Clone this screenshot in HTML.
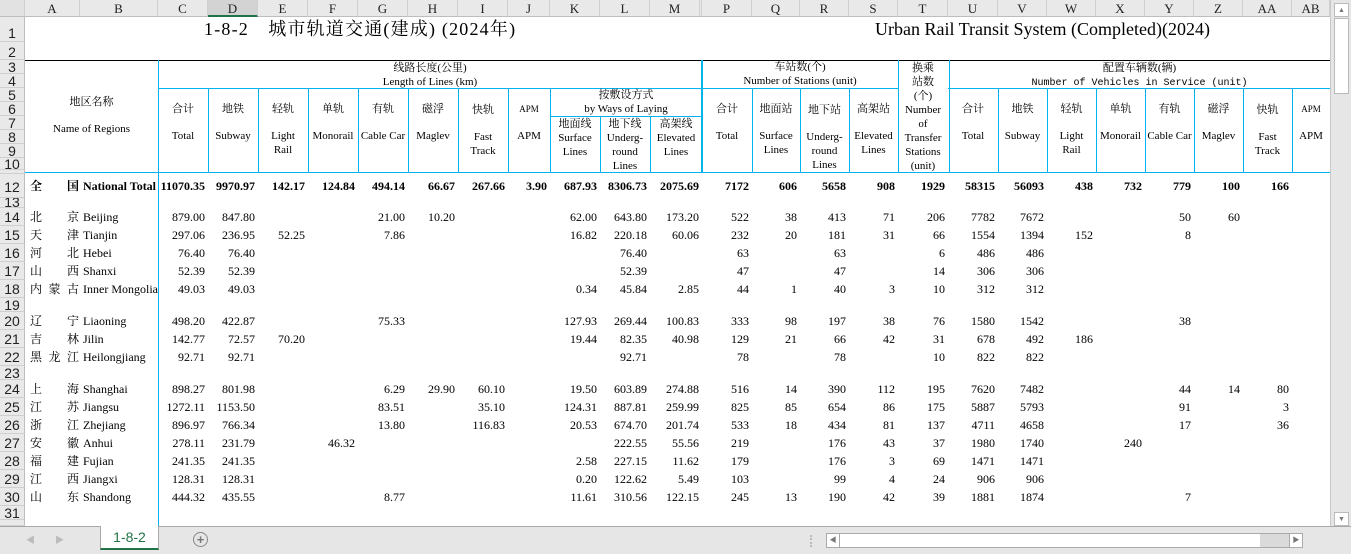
<!DOCTYPE html>
<html><head><meta charset="utf-8">
<style>
*{margin:0;padding:0;box-sizing:border-box}
body{width:1351px;height:554px;overflow:hidden;background:#fff;position:relative;font-family:"Liberation Serif","Noto Serif CJK SC",serif;color:#000}
.ch{position:absolute;top:0;height:17px;background:#e9e9e9;border-right:1px solid #cfcfcf;border-bottom:1px solid #bdbdbd;font:13px "Liberation Serif",serif;text-align:center;line-height:17px;color:#222}
.rh{position:absolute;left:0;width:25px;background:#e9e9e9;border-bottom:1px solid #cfcfcf;border-right:1px solid #bdbdbd;font:14px "Liberation Sans",sans-serif;text-align:center;color:#222;overflow:hidden}
.l{position:absolute;background:#00b4ef}
.h{position:absolute;text-align:center;font-size:11px;line-height:14px;white-space:nowrap}
table{position:absolute;left:25px;top:174px;border-collapse:collapse;table-layout:fixed;font-size:12px}
td{padding:0 3px 0 0;text-align:right;white-space:nowrap;overflow:visible;line-height:14px}
td.a{padding:0 1px 0 5px;text-align:left}
td.a span{display:flex;justify-content:space-between}
td.a i{font-style:normal}
td.b{text-align:left;padding:0 0 0 3px}
tr.t td{font-weight:bold}
</style></head><body>
<div class="ch" style="left:0;width:25px;background:#e2e2e2"></div>
<div class="ch" style="left:25px;width:55px">A</div>
<div class="ch" style="left:80px;width:78px">B</div>
<div class="ch" style="left:158px;width:50px">C</div>
<div class="ch" style="left:208px;width:50px;background:#d3d3d3;border-bottom:2px solid #217346">D</div>
<div class="ch" style="left:258px;width:50px">E</div>
<div class="ch" style="left:308px;width:50px">F</div>
<div class="ch" style="left:358px;width:50px">G</div>
<div class="ch" style="left:408px;width:50px">H</div>
<div class="ch" style="left:458px;width:50px">I</div>
<div class="ch" style="left:508px;width:42px">J</div>
<div class="ch" style="left:550px;width:50px">K</div>
<div class="ch" style="left:600px;width:50px">L</div>
<div class="ch" style="left:650px;width:50px">M</div>
<div class="ch" style="left:700px;width:2px;padding:0"></div>
<div class="ch" style="left:702px;width:50px">P</div>
<div class="ch" style="left:752px;width:48px">Q</div>
<div class="ch" style="left:800px;width:49px">R</div>
<div class="ch" style="left:849px;width:49px">S</div>
<div class="ch" style="left:898px;width:50px">T</div>
<div class="ch" style="left:948px;width:50px">U</div>
<div class="ch" style="left:998px;width:49px">V</div>
<div class="ch" style="left:1047px;width:49px">W</div>
<div class="ch" style="left:1096px;width:49px">X</div>
<div class="ch" style="left:1145px;width:49px">Y</div>
<div class="ch" style="left:1194px;width:49px">Z</div>
<div class="ch" style="left:1243px;width:49px">AA</div>
<div class="ch" style="left:1292px;width:38px">AB</div>
<div class="rh" style="top:17px;height:25px;line-height:32px">1</div>
<div class="rh" style="top:42px;height:18px;line-height:20px">2</div>
<div class="rh" style="top:60px;height:14px;line-height:14px">3</div>
<div class="rh" style="top:74px;height:14px;line-height:14px">4</div>
<div class="rh" style="top:88px;height:14px;line-height:14px">5</div>
<div class="rh" style="top:102px;height:14px;line-height:14px">6</div>
<div class="rh" style="top:116px;height:14px;line-height:14px">7</div>
<div class="rh" style="top:130px;height:14px;line-height:14px">8</div>
<div class="rh" style="top:144px;height:14px;line-height:14px">9</div>
<div class="rh" style="top:158px;height:12px;line-height:12px">10</div>
<div class="rh" style="top:170px;height:4px"></div>
<div class="rh" style="top:174px;height:24px;line-height:26px">12</div>
<div class="rh" style="top:198px;height:10px;line-height:8px">13</div>
<div class="rh" style="top:208px;height:18px;line-height:19px">14</div>
<div class="rh" style="top:226px;height:18px;line-height:19px">15</div>
<div class="rh" style="top:244px;height:18px;line-height:19px">16</div>
<div class="rh" style="top:262px;height:18px;line-height:19px">17</div>
<div class="rh" style="top:280px;height:18px;line-height:19px">18</div>
<div class="rh" style="top:298px;height:14px;line-height:14px">19</div>
<div class="rh" style="top:312px;height:18px;line-height:19px">20</div>
<div class="rh" style="top:330px;height:18px;line-height:19px">21</div>
<div class="rh" style="top:348px;height:18px;line-height:19px">22</div>
<div class="rh" style="top:366px;height:14px;line-height:14px">23</div>
<div class="rh" style="top:380px;height:18px;line-height:19px">24</div>
<div class="rh" style="top:398px;height:18px;line-height:19px">25</div>
<div class="rh" style="top:416px;height:18px;line-height:19px">26</div>
<div class="rh" style="top:434px;height:18px;line-height:19px">27</div>
<div class="rh" style="top:452px;height:18px;line-height:19px">28</div>
<div class="rh" style="top:470px;height:18px;line-height:19px">29</div>
<div class="rh" style="top:488px;height:18px;line-height:19px">30</div>
<div class="rh" style="top:506px;height:14px;line-height:14px">31</div>
<div class="rh" style="top:520px;height:6px"></div>

<div class="h" style="left:204px;top:18px;font-size:18px;line-height:22px;text-align:left;letter-spacing:1.2px">1-8-2　城市轨道交通(建成) (2024年)</div>
<div class="h" style="left:875px;top:18px;font-size:18px;line-height:22px;text-align:left">Urban Rail Transit System (Completed)(2024)</div>

<div style="position:absolute;left:25px;top:60px;width:1305px;height:1px;background:#000"></div>
<div class="l" style="left:25px;top:172px;width:1305px;height:1px"></div>
<div class="l" style="left:158px;top:88px;width:740px;height:1px"></div>
<div class="l" style="left:948px;top:88px;width:382px;height:1px"></div>
<div class="l" style="left:550px;top:116px;width:152px;height:1px"></div>
<div class="l" style="left:158px;top:60px;width:1px;height:466px"></div>
<div class="l" style="left:208px;top:88px;width:1px;height:84px"></div>
<div class="l" style="left:258px;top:88px;width:1px;height:84px"></div>
<div class="l" style="left:308px;top:88px;width:1px;height:84px"></div>
<div class="l" style="left:358px;top:88px;width:1px;height:84px"></div>
<div class="l" style="left:408px;top:88px;width:1px;height:84px"></div>
<div class="l" style="left:458px;top:88px;width:1px;height:84px"></div>
<div class="l" style="left:508px;top:88px;width:1px;height:84px"></div>
<div class="l" style="left:550px;top:88px;width:1px;height:84px"></div>
<div class="l" style="left:600px;top:116px;width:1px;height:56px"></div>
<div class="l" style="left:650px;top:116px;width:1px;height:56px"></div>
<div class="l" style="left:701px;top:60px;width:2px;height:112px"></div>
<div class="l" style="left:752px;top:88px;width:1px;height:84px"></div>
<div class="l" style="left:800px;top:88px;width:1px;height:84px"></div>
<div class="l" style="left:849px;top:88px;width:1px;height:84px"></div>
<div class="l" style="left:898px;top:60px;width:1px;height:112px"></div>
<div class="l" style="left:949px;top:60px;width:1px;height:112px"></div>
<div class="l" style="left:998px;top:88px;width:1px;height:84px"></div>
<div class="l" style="left:1047px;top:88px;width:1px;height:84px"></div>
<div class="l" style="left:1096px;top:88px;width:1px;height:84px"></div>
<div class="l" style="left:1145px;top:88px;width:1px;height:84px"></div>
<div class="l" style="left:1194px;top:88px;width:1px;height:84px"></div>
<div class="l" style="left:1243px;top:88px;width:1px;height:84px"></div>
<div class="l" style="left:1292px;top:88px;width:1px;height:84px"></div>

<div class="h" style="left:25px;width:133px;top:95px">地区名称</div>
<div class="h" style="left:25px;width:133px;top:122px">Name of Regions</div>
<div class="h" style="left:158px;width:544px;top:61px">线路长度(公里)<br>Length of Lines (km)</div>
<div class="h" style="left:158px;width:50px;top:102px">合计</div>
<div class="h" style="left:158px;width:50px;top:129px">Total</div>
<div class="h" style="left:208px;width:50px;top:102px">地铁</div>
<div class="h" style="left:208px;width:50px;top:129px">Subway</div>
<div class="h" style="left:258px;width:50px;top:102px">轻轨</div>
<div class="h" style="left:258px;width:50px;top:129px">Light<br>Rail</div>
<div class="h" style="left:308px;width:50px;top:102px">单轨</div>
<div class="h" style="left:308px;width:50px;top:129px">Monorail</div>
<div class="h" style="left:358px;width:50px;top:102px">有轨</div>
<div class="h" style="left:358px;width:50px;top:129px">Cable Car</div>
<div class="h" style="left:408px;width:50px;top:102px">磁浮</div>
<div class="h" style="left:408px;width:50px;top:129px">Maglev</div>
<div class="h" style="left:458px;width:50px;top:103px">快轨</div>
<div class="h" style="left:458px;width:50px;top:130px">Fast<br>Track</div>
<div class="h" style="left:508px;width:42px;top:102px;font-size:9px">APM</div>
<div class="h" style="left:508px;width:42px;top:129px">APM</div>
<div class="h" style="left:550px;width:152px;top:88px">按敷设方式<br>by Ways of Laying</div>
<div class="h" style="left:550px;width:50px;top:117px">地面线<br>Surface<br>Lines</div>
<div class="h" style="left:600px;width:50px;top:117px">地下线<br>Underg-<br>round<br>Lines</div>
<div class="h" style="left:650px;width:52px;top:117px">高架线<br>Elevated<br>Lines</div>
<div class="h" style="left:702px;width:196px;top:60px">车站数(个)<br>Number of Stations (unit)</div>
<div class="h" style="left:702px;width:50px;top:102px">合计</div>
<div class="h" style="left:702px;width:50px;top:129px">Total</div>
<div class="h" style="left:752px;width:48px;top:102px">地面站</div>
<div class="h" style="left:752px;width:48px;top:129px">Surface<br>Lines</div>
<div class="h" style="left:800px;width:49px;top:103px">地下站</div>
<div class="h" style="left:800px;width:49px;top:130px">Underg-<br>round<br>Lines</div>
<div class="h" style="left:849px;width:49px;top:102px">高架站</div>
<div class="h" style="left:849px;width:49px;top:129px">Elevated<br>Lines</div>
<div class="h" style="left:898px;width:50px;top:61px">换乘<br>站数<br>(个)<br>Number<br>of<br>Transfer<br>Stations<br>(unit)</div>
<div class="h" style="left:949px;width:381px;top:61px">配置车辆数(辆)<br><span style="font-family:'Liberation Mono',monospace;font-size:10px">Number of Vehicles in Service (unit)</span></div>
<div class="h" style="left:948px;width:50px;top:102px">合计</div>
<div class="h" style="left:948px;width:50px;top:129px">Total</div>
<div class="h" style="left:998px;width:49px;top:102px">地铁</div>
<div class="h" style="left:998px;width:49px;top:129px">Subway</div>
<div class="h" style="left:1047px;width:49px;top:102px">轻轨</div>
<div class="h" style="left:1047px;width:49px;top:129px">Light<br>Rail</div>
<div class="h" style="left:1096px;width:49px;top:102px">单轨</div>
<div class="h" style="left:1096px;width:49px;top:129px">Monorail</div>
<div class="h" style="left:1145px;width:49px;top:102px">有轨</div>
<div class="h" style="left:1145px;width:49px;top:129px">Cable Car</div>
<div class="h" style="left:1194px;width:49px;top:102px">磁浮</div>
<div class="h" style="left:1194px;width:49px;top:129px">Maglev</div>
<div class="h" style="left:1243px;width:49px;top:103px">快轨</div>
<div class="h" style="left:1243px;width:49px;top:130px">Fast<br>Track</div>
<div class="h" style="left:1292px;width:38px;top:102px;font-size:9px">APM</div>
<div class="h" style="left:1292px;width:38px;top:129px">APM</div>

<table>
<colgroup><col style="width:55px"><col style="width:78px"><col style="width:50px"><col style="width:50px"><col style="width:50px"><col style="width:50px"><col style="width:50px"><col style="width:50px"><col style="width:50px"><col style="width:42px"><col style="width:50px"><col style="width:50px"><col style="width:52px"><col style="width:50px"><col style="width:48px"><col style="width:49px"><col style="width:49px"><col style="width:50px"><col style="width:50px"><col style="width:49px"><col style="width:49px"><col style="width:49px"><col style="width:49px"><col style="width:49px"><col style="width:49px"><col style="width:38px"></colgroup>
<tr class="t" style="height:24px"><td class="a"><span><i>全</i><i>国</i></span></td><td class="b">National Total</td><td>11070.35</td><td>9970.97</td><td>142.17</td><td>124.84</td><td>494.14</td><td>66.67</td><td>267.66</td><td>3.90</td><td>687.93</td><td>8306.73</td><td>2075.69</td><td>7172</td><td>606</td><td>5658</td><td>908</td><td>1929</td><td>58315</td><td>56093</td><td>438</td><td>732</td><td>779</td><td>100</td><td>166</td><td></td></tr>
<tr style="height:10px"><td colspan="26"></td></tr>
<tr style="height:18px"><td class="a"><span><i>北</i><i>京</i></span></td><td class="b">Beijing</td><td>879.00</td><td>847.80</td><td></td><td></td><td>21.00</td><td>10.20</td><td></td><td></td><td>62.00</td><td>643.80</td><td>173.20</td><td>522</td><td>38</td><td>413</td><td>71</td><td>206</td><td>7782</td><td>7672</td><td></td><td></td><td>50</td><td>60</td><td></td><td></td></tr>
<tr style="height:18px"><td class="a"><span><i>天</i><i>津</i></span></td><td class="b">Tianjin</td><td>297.06</td><td>236.95</td><td>52.25</td><td></td><td>7.86</td><td></td><td></td><td></td><td>16.82</td><td>220.18</td><td>60.06</td><td>232</td><td>20</td><td>181</td><td>31</td><td>66</td><td>1554</td><td>1394</td><td>152</td><td></td><td>8</td><td></td><td></td><td></td></tr>
<tr style="height:18px"><td class="a"><span><i>河</i><i>北</i></span></td><td class="b">Hebei</td><td>76.40</td><td>76.40</td><td></td><td></td><td></td><td></td><td></td><td></td><td></td><td>76.40</td><td></td><td>63</td><td></td><td>63</td><td></td><td>6</td><td>486</td><td>486</td><td></td><td></td><td></td><td></td><td></td><td></td></tr>
<tr style="height:18px"><td class="a"><span><i>山</i><i>西</i></span></td><td class="b">Shanxi</td><td>52.39</td><td>52.39</td><td></td><td></td><td></td><td></td><td></td><td></td><td></td><td>52.39</td><td></td><td>47</td><td></td><td>47</td><td></td><td>14</td><td>306</td><td>306</td><td></td><td></td><td></td><td></td><td></td><td></td></tr>
<tr style="height:18px"><td class="a"><span><i>内</i><i>蒙</i><i>古</i></span></td><td class="b">Inner Mongolia</td><td>49.03</td><td>49.03</td><td></td><td></td><td></td><td></td><td></td><td></td><td>0.34</td><td>45.84</td><td>2.85</td><td>44</td><td>1</td><td>40</td><td>3</td><td>10</td><td>312</td><td>312</td><td></td><td></td><td></td><td></td><td></td><td></td></tr>
<tr style="height:14px"><td colspan="26"></td></tr>
<tr style="height:18px"><td class="a"><span><i>辽</i><i>宁</i></span></td><td class="b">Liaoning</td><td>498.20</td><td>422.87</td><td></td><td></td><td>75.33</td><td></td><td></td><td></td><td>127.93</td><td>269.44</td><td>100.83</td><td>333</td><td>98</td><td>197</td><td>38</td><td>76</td><td>1580</td><td>1542</td><td></td><td></td><td>38</td><td></td><td></td><td></td></tr>
<tr style="height:18px"><td class="a"><span><i>吉</i><i>林</i></span></td><td class="b">Jilin</td><td>142.77</td><td>72.57</td><td>70.20</td><td></td><td></td><td></td><td></td><td></td><td>19.44</td><td>82.35</td><td>40.98</td><td>129</td><td>21</td><td>66</td><td>42</td><td>31</td><td>678</td><td>492</td><td>186</td><td></td><td></td><td></td><td></td><td></td></tr>
<tr style="height:18px"><td class="a"><span><i>黑</i><i>龙</i><i>江</i></span></td><td class="b">Heilongjiang</td><td>92.71</td><td>92.71</td><td></td><td></td><td></td><td></td><td></td><td></td><td></td><td>92.71</td><td></td><td>78</td><td></td><td>78</td><td></td><td>10</td><td>822</td><td>822</td><td></td><td></td><td></td><td></td><td></td><td></td></tr>
<tr style="height:14px"><td colspan="26"></td></tr>
<tr style="height:18px"><td class="a"><span><i>上</i><i>海</i></span></td><td class="b">Shanghai</td><td>898.27</td><td>801.98</td><td></td><td></td><td>6.29</td><td>29.90</td><td>60.10</td><td></td><td>19.50</td><td>603.89</td><td>274.88</td><td>516</td><td>14</td><td>390</td><td>112</td><td>195</td><td>7620</td><td>7482</td><td></td><td></td><td>44</td><td>14</td><td>80</td><td></td></tr>
<tr style="height:18px"><td class="a"><span><i>江</i><i>苏</i></span></td><td class="b">Jiangsu</td><td>1272.11</td><td>1153.50</td><td></td><td></td><td>83.51</td><td></td><td>35.10</td><td></td><td>124.31</td><td>887.81</td><td>259.99</td><td>825</td><td>85</td><td>654</td><td>86</td><td>175</td><td>5887</td><td>5793</td><td></td><td></td><td>91</td><td></td><td>3</td><td></td></tr>
<tr style="height:18px"><td class="a"><span><i>浙</i><i>江</i></span></td><td class="b">Zhejiang</td><td>896.97</td><td>766.34</td><td></td><td></td><td>13.80</td><td></td><td>116.83</td><td></td><td>20.53</td><td>674.70</td><td>201.74</td><td>533</td><td>18</td><td>434</td><td>81</td><td>137</td><td>4711</td><td>4658</td><td></td><td></td><td>17</td><td></td><td>36</td><td></td></tr>
<tr style="height:18px"><td class="a"><span><i>安</i><i>徽</i></span></td><td class="b">Anhui</td><td>278.11</td><td>231.79</td><td></td><td>46.32</td><td></td><td></td><td></td><td></td><td></td><td>222.55</td><td>55.56</td><td>219</td><td></td><td>176</td><td>43</td><td>37</td><td>1980</td><td>1740</td><td></td><td>240</td><td></td><td></td><td></td><td></td></tr>
<tr style="height:18px"><td class="a"><span><i>福</i><i>建</i></span></td><td class="b">Fujian</td><td>241.35</td><td>241.35</td><td></td><td></td><td></td><td></td><td></td><td></td><td>2.58</td><td>227.15</td><td>11.62</td><td>179</td><td></td><td>176</td><td>3</td><td>69</td><td>1471</td><td>1471</td><td></td><td></td><td></td><td></td><td></td><td></td></tr>
<tr style="height:18px"><td class="a"><span><i>江</i><i>西</i></span></td><td class="b">Jiangxi</td><td>128.31</td><td>128.31</td><td></td><td></td><td></td><td></td><td></td><td></td><td>0.20</td><td>122.62</td><td>5.49</td><td>103</td><td></td><td>99</td><td>4</td><td>24</td><td>906</td><td>906</td><td></td><td></td><td></td><td></td><td></td><td></td></tr>
<tr style="height:18px"><td class="a"><span><i>山</i><i>东</i></span></td><td class="b">Shandong</td><td>444.32</td><td>435.55</td><td></td><td></td><td>8.77</td><td></td><td></td><td></td><td>11.61</td><td>310.56</td><td>122.15</td><td>245</td><td>13</td><td>190</td><td>42</td><td>39</td><td>1881</td><td>1874</td><td></td><td></td><td>7</td><td></td><td></td><td></td></tr>
</table>

<div style="position:absolute;left:1330px;top:0;width:21px;height:526px;background:#e6e6e6;border-left:1px solid #c8c8c8"></div>
<div style="position:absolute;left:1334px;top:3px;width:15px;height:14px;background:#fff;border:1px solid #bbb;font-size:7px;text-align:center;line-height:12px;color:#777">▲</div>
<div style="position:absolute;left:1334px;top:18px;width:15px;height:76px;background:#fff;border:1px solid #bbb"></div>
<div style="position:absolute;left:1334px;top:512px;width:15px;height:14px;background:#fff;border:1px solid #bbb;font-size:7px;text-align:center;line-height:12px;color:#777">▼</div>
<div style="position:absolute;left:0;top:526px;width:1351px;height:28px;background:#e6e6e6;border-top:1px solid #a8a8a8"></div>
<div style="position:absolute;left:26px;top:533px;font-size:9px;color:#bbb">◀</div>
<div style="position:absolute;left:55px;top:533px;font-size:9px;color:#bbb">▶</div>
<div style="position:absolute;left:100px;top:526px;width:59px;height:24px;background:#fff;border-left:1px solid #a8a8a8;border-right:1px solid #a8a8a8;border-bottom:2px solid #217346;font:14px 'Liberation Sans',sans-serif;color:#217346;text-align:center;line-height:22px">1-8-2</div>
<div style="position:absolute;left:193px;top:532px;width:15px;height:15px;border:1px solid #888;border-radius:50%;font:bold 13px 'Liberation Sans',sans-serif;color:#777;text-align:center;line-height:13px">+</div>
<div style="position:absolute;left:810px;top:535px;width:2px;height:12px;border-left:2px dotted #bbb"></div>
<div style="position:absolute;left:826px;top:533px;width:477px;height:15px;background:#fff;border:1px solid #aaa"></div>
<div style="position:absolute;left:826px;top:533px;width:14px;height:15px;border:1px solid #aaa;font-size:7px;color:#777;text-align:center;line-height:13px;background:#fff">◀</div>
<div style="position:absolute;left:1260px;top:534px;width:29px;height:13px;background:#dadada"></div>
<div style="position:absolute;left:1289px;top:533px;width:14px;height:15px;border:1px solid #aaa;font-size:7px;color:#777;text-align:center;line-height:13px;background:#fff">▶</div>
</body></html>
